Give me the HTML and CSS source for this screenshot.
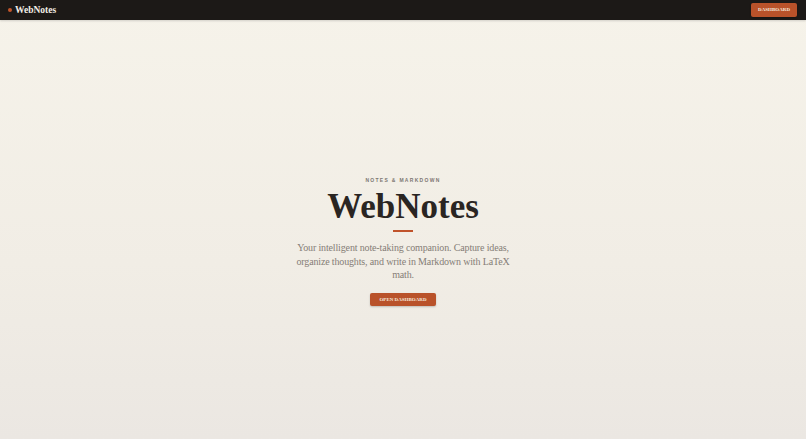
FILE: index.html
```html
<!DOCTYPE html>
<html lang="en">
<head>
  <meta charset="UTF-8" />
  <meta name="viewport" content="width=device-width, initial-scale=1.0"/>
  <title>WebNotes</title>
  <link rel="stylesheet" href="styles.css">
</head>
<body>

<nav class="topbar">
  <a class="brand" href="#"><span class="brand-dot"></span>WebNotes</a>
  <a class="btn btn-small" href="#">Dashboard</a>
</nav>

<main class="hero">
  <div class="eyebrow">Notes &amp; Markdown</div>
  <h1 class="hero-title">WebNotes</h1>
  <div class="rule"></div>
  <p class="hero-text">Your intelligent note-taking companion. Capture ideas, organize thoughts, and write in Markdown with LaTeX math.</p>
  <a class="btn btn-main" href="#">Open Dashboard</a>
</main>

</body>
</html>
```

FILE: styles.css
```css
html, body {
  height: 100%;
}

body {
  margin: 0;
  display: flex;
  flex-direction: column;
  font-family: "Liberation Serif", "DejaVu Serif", serif;
  background: linear-gradient(180deg, #f6f3ea 0%, #f1ede5 60%, #ebe7e2 100%);
  color: #2a2522;
}

.topbar {
  height: 20px;
  background: #1c1917;
  display: flex;
  align-items: center;
  justify-content: space-between;
  padding: 0 9px 0 8px;
  box-shadow: 0 1px 2px rgba(0, 0, 0, 0.15);
}

.brand {
  display: flex;
  align-items: center;
  gap: 3px;
  color: #f3eee6;
  text-decoration: none;
  font-size: 9.5px;
  font-weight: bold;
}

.brand-dot {
  width: 4px;
  height: 4px;
  border-radius: 50%;
  background: #c2552b;
}

.btn {
  display: inline-block;
  background: #b9522a;
  color: #f6e9df;
  text-decoration: none;
  text-transform: uppercase;
  font-weight: bold;
  font-size: 5px;
  line-height: 6px;
  border-radius: 2px;
  box-shadow: 0 1px 2px rgba(0, 0, 0, 0.2);
}

.btn-small {
  padding: 4px 7px;
}

.btn-main {
  padding: 4px 9px 3px;
}

.hero {
  flex: 1;
  display: flex;
  flex-direction: column;
  align-items: center;
  text-align: center;
  padding-top: 157px;
}

.eyebrow {
  font-family: "Liberation Sans", Arial, sans-serif;
  font-size: 5px;
  font-weight: bold;
  letter-spacing: 1.3px;
  text-transform: uppercase;
  color: #7d7772;
}

.hero-title {
  margin: 4px 0 0;
  font-size: 35px;
  font-weight: bold;
  line-height: 40px;
  color: #2a2522;
}

.rule {
  width: 20px;
  height: 2px;
  background: #c0532b;
  margin-top: 3px;
}

.hero-text {
  max-width: 218px;
  margin: 9px 0 11px;
  font-size: 10px;
  letter-spacing: -0.15px;
  line-height: 13.6px;
  color: #857d77;
}
```
